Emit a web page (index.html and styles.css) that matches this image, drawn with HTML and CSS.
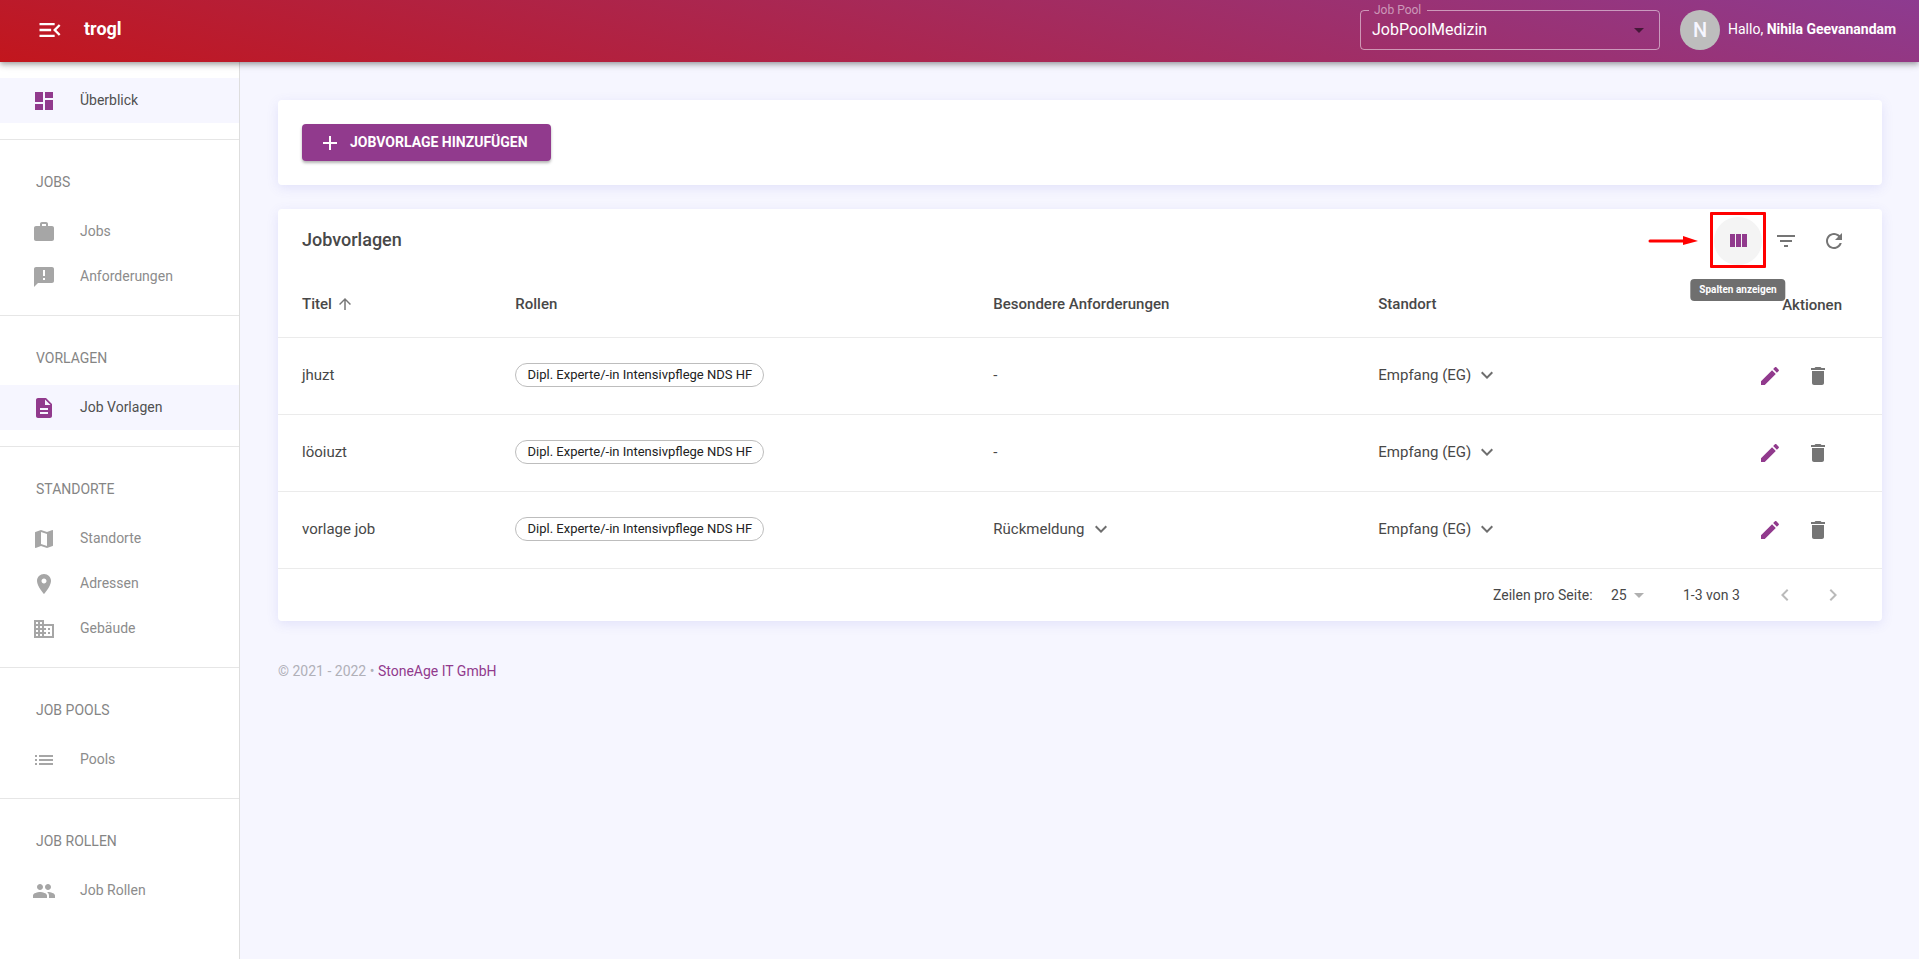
FILE: index.html
```html
<!DOCTYPE html>
<html lang="de">
<head>
<meta charset="utf-8">
<meta name="viewport" content="width=device-width, initial-scale=1">
<title>trogl – Job Vorlagen</title>
<link rel="stylesheet" href="styles.css">
</head>
<body>
<svg class="sprite" aria-hidden="true">
  <symbol id="menu-open" viewBox="0 0 24 24"><path d="M3 18h13v-2H3v2zM3 13h10v-2H3v2zm0-7v2h13V6H3zm18 9.59L17.42 12 21 8.41 19.59 7l-5 5 5 5L21 15.59z"/></symbol>
  <symbol id="dashboard" viewBox="0 0 24 24"><path d="M3 13h8V3H3v10zm0 8h8v-6H3v6zm10 0h8V11h-8v10zm0-18v6h8V3h-8z"/></symbol>
  <symbol id="work" viewBox="0 0 24 24"><path d="M20 6h-4V4c0-1.11-.89-2-2-2h-4c-1.11 0-2 .89-2 2v2H4c-1.11 0-1.99.89-1.99 2L2 19c0 1.11.89 2 2 2h16c1.11 0 2-.89 2-2V8c0-1.11-.89-2-2-2zm-6 0h-4V4h4v2z"/></symbol>
  <symbol id="feedback" viewBox="0 0 24 24"><path d="M20 2H4c-1.1 0-1.99.9-1.99 2L2 22l4-4h14c1.1 0 2-.9 2-2V4c0-1.1-.9-2-2-2zm-7 13h-2v-2h2v2zm0-4h-2V5h2v6z"/></symbol>
  <symbol id="description" viewBox="0 0 24 24"><path d="M14 2H6c-1.1 0-1.99.9-1.99 2L4 20c0 1.1.89 2 1.99 2H18c1.1 0 2-.9 2-2V8l-6-6zm2 16H8v-2h8v2zm0-4H8v-2h8v2zm-3-5V3.5L18.5 9H13z"/></symbol>
  <symbol id="map" viewBox="0 0 24 24"><path d="M20.5 3l-.16.03L15 5.1 9 3 3.36 4.9c-.21.07-.36.25-.36.48V20.5c0 .28.22.5.5.5l.16-.03L9 18.9l6 2.1 5.64-1.9c.21-.07.36-.25.36-.48V3.5c0-.28-.22-.5-.5-.5zM15 19l-6-2.11V5l6 2.11V19z"/></symbol>
  <symbol id="place" viewBox="0 0 24 24"><path d="M12 2C8.13 2 5 5.13 5 9c0 5.25 7 13 7 13s7-7.75 7-13c0-3.87-3.13-7-7-7zm0 9.5c-1.38 0-2.5-1.12-2.5-2.5s1.12-2.5 2.5-2.5 2.5 1.12 2.5 2.5-1.12 2.5-2.5 2.5z"/></symbol>
  <symbol id="business" viewBox="0 0 24 24"><path d="M12 7V3H2v18h20V7H12zM6 19H4v-2h2v2zm0-4H4v-2h2v2zm0-4H4V9h2v2zm0-4H4V5h2v2zm4 12H8v-2h2v2zm0-4H8v-2h2v2zm0-4H8V9h2v2zm0-4H8V5h2v2zm10 12h-8v-2h2v-2h-2v-2h2v-2h-2V9h8v10zm-2-8h-2v2h2v-2zm0 4h-2v2h2v-2z"/></symbol>
  <symbol id="list" viewBox="0 0 24 24"><path d="M3 13h2v-2H3v2zm0 4h2v-2H3v2zm0-8h2V7H3v2zm4 4h14v-2H7v2zm0 4h14v-2H7v2zM7 7v2h14V7H7z"/></symbol>
  <symbol id="people" viewBox="0 0 24 24"><path d="M16 11c1.66 0 2.99-1.34 2.99-3S17.66 5 16 5c-1.66 0-3 1.34-3 3s1.34 3 3 3zm-8 0c1.66 0 2.99-1.34 2.99-3S9.66 5 8 5C6.34 5 5 6.34 5 8s1.34 3 3 3zm0 2c-2.33 0-7 1.17-7 3.5V19h14v-2.5c0-2.33-4.67-3.5-7-3.5zm8 0c-.29 0-.62.02-.97.05 1.16.84 1.97 1.97 1.97 3.45V19h6v-2.5c0-2.33-4.67-3.5-7-3.5z"/></symbol>
  <symbol id="add" viewBox="0 0 24 24"><path d="M19 13h-6v6h-2v-6H5v-2h6V5h2v6h6v2z"/></symbol>
  <symbol id="columns" viewBox="0 0 24 24"><path d="M10 18h5V5h-5v13zm-6 0h5V5H4v13zM16 5v13h5V5h-5z"/></symbol>
  <symbol id="filter" viewBox="0 0 24 24"><path d="M10 18h4v-2h-4v2zM3 6v2h18V6H3zm3 7h12v-2H6v2z"/></symbol>
  <symbol id="refresh" viewBox="0 0 24 24"><path d="M17.65 6.35C16.2 4.9 14.21 4 12 4c-4.42 0-7.99 3.58-7.99 8s3.57 8 7.99 8c3.73 0 6.84-2.55 7.73-6h-2.08c-.82 2.33-3.04 4-5.65 4-3.31 0-6-2.69-6-6s2.69-6 6-6c1.66 0 3.14.69 4.22 1.78L13 11h7V4l-2.35 2.35z"/></symbol>
  <symbol id="arrow-up" viewBox="0 0 24 24"><path d="M4 12l1.41 1.41L11 7.83V20h2V7.83l5.58 5.59L20 12l-8-8-8 8z"/></symbol>
  <symbol id="expand" viewBox="0 0 24 24"><path d="M16.59 8.59L12 13.17 7.41 8.59 6 10l6 6 6-6z"/></symbol>
  <symbol id="drop" viewBox="0 0 24 24"><path d="M7 10l5 5 5-5z"/></symbol>
  <symbol id="edit" viewBox="0 0 24 24"><path d="M3 17.25V21h3.75L17.81 9.94l-3.75-3.75L3 17.25zM20.71 7.04c.39-.39.39-1.02 0-1.41l-2.34-2.34c-.39-.39-1.02-.39-1.41 0l-1.83 1.83 3.75 3.75 1.83-1.83z"/></symbol>
  <symbol id="delete" viewBox="0 0 24 24"><path d="M6 19c0 1.1.9 2 2 2h8c1.1 0 2-.9 2-2V7H6v12zM19 4h-3.5l-1-1h-5l-1 1H5v2h14V4z"/></symbol>
  <symbol id="left" viewBox="0 0 24 24"><path d="M15.41 7.41L14 6l-6 6 6 6 1.41-1.41L10.83 12z"/></symbol>
  <symbol id="right" viewBox="0 0 24 24"><path d="M10 6L8.59 7.41 13.17 12l-4.58 4.59L10 18l6-6z"/></symbol>
</svg>

<header class="topbar">
  <button class="menu-button" type="button" aria-label="Menü schließen"><svg class="icon-large"><use href="#menu-open"/></svg></button>
  <a class="brand" href="#">trogl</a>
  <fieldset class="pool">
    <legend><label for="pool">Job Pool</label></legend>
    <div class="pool-control">
      <select id="pool"><option>JobPoolMedizin</option></select>
      <svg class="icon pool-arrow"><use href="#drop"/></svg>
    </div>
  </fieldset>
  <div class="user">
    <span class="avatar">N</span>
    <span class="greeting">Hallo, <b>Nihila Geevanandam</b></span>
  </div>
</header>

<div class="layout">
  <nav class="sidebar">
    <section class="nav-group">
      <a class="nav-item active" href="#"><svg class="icon"><use href="#dashboard"/></svg><span>Überblick</span></a>
    </section>
    <section class="nav-group">
      <h2>JOBS</h2>
      <a class="nav-item" href="#"><svg class="icon"><use href="#work"/></svg><span>Jobs</span></a>
      <a class="nav-item" href="#"><svg class="icon"><use href="#feedback"/></svg><span>Anforderungen</span></a>
    </section>
    <section class="nav-group">
      <h2>VORLAGEN</h2>
      <a class="nav-item active" href="#"><svg class="icon"><use href="#description"/></svg><span>Job Vorlagen</span></a>
    </section>
    <section class="nav-group">
      <h2>STANDORTE</h2>
      <a class="nav-item" href="#"><svg class="icon"><use href="#map"/></svg><span>Standorte</span></a>
      <a class="nav-item" href="#"><svg class="icon"><use href="#place"/></svg><span>Adressen</span></a>
      <a class="nav-item" href="#"><svg class="icon"><use href="#business"/></svg><span>Gebäude</span></a>
    </section>
    <section class="nav-group">
      <h2>JOB POOLS</h2>
      <a class="nav-item" href="#"><svg class="icon"><use href="#list"/></svg><span>Pools</span></a>
    </section>
    <section class="nav-group">
      <h2>JOB ROLLEN</h2>
      <a class="nav-item" href="#"><svg class="icon"><use href="#people"/></svg><span>Job Rollen</span></a>
    </section>
  </nav>

  <main class="content">
    <section class="card actions-card">
      <button class="add-button" type="button"><svg class="icon"><use href="#add"/></svg><span>JOBVORLAGE HINZUFÜGEN</span></button>
    </section>

    <section class="card">
      <div class="toolbar">
        <h1>Jobvorlagen</h1>
        <div class="columns-tool">
          <svg class="pointer" viewBox="0 0 50 10"><path d="M2 5h34" stroke="#f00" stroke-width="3" stroke-linecap="round"/><path d="M35 0l15 5-15 4z" fill="#f00"/></svg>
          <button class="icon-button hovered" type="button" aria-describedby="columns-tip" aria-label="Spalten anzeigen"><svg class="icon"><use href="#columns"/></svg></button>
          <span class="highlight"></span>
          <span class="tooltip" id="columns-tip" role="tooltip">Spalten anzeigen</span>
        </div>
        <button class="icon-button" type="button" aria-label="Filter"><svg class="icon"><use href="#filter"/></svg></button>
        <button class="icon-button" type="button" aria-label="Aktualisieren"><svg class="icon"><use href="#refresh"/></svg></button>
      </div>

      <table>
        <colgroup><col class="col-title"><col class="col-roles"><col class="col-needs"><col class="col-place"><col class="col-actions"></colgroup>
        <thead>
          <tr>
            <th><span class="with-icon">Titel <svg class="icon-small"><use href="#arrow-up"/></svg></span></th>
            <th>Rollen</th>
            <th>Besondere Anforderungen</th>
            <th>Standort</th>
            <th class="right">Aktionen</th>
          </tr>
        </thead>
        <tbody>
          <tr>
            <td>jhuzt</td>
            <td><span class="chip">Dipl. Experte/-in Intensivpflege NDS HF</span></td>
            <td>-</td>
            <td><span class="with-icon">Empfang (EG) <svg class="icon"><use href="#expand"/></svg></span></td>
            <td><div class="row-actions"><button class="icon-button primary" type="button" aria-label="Bearbeiten"><svg class="icon"><use href="#edit"/></svg></button><button class="icon-button" type="button" aria-label="Löschen"><svg class="icon"><use href="#delete"/></svg></button></div></td>
          </tr>
          <tr>
            <td>löoiuzt</td>
            <td><span class="chip">Dipl. Experte/-in Intensivpflege NDS HF</span></td>
            <td>-</td>
            <td><span class="with-icon">Empfang (EG) <svg class="icon"><use href="#expand"/></svg></span></td>
            <td><div class="row-actions"><button class="icon-button primary" type="button" aria-label="Bearbeiten"><svg class="icon"><use href="#edit"/></svg></button><button class="icon-button" type="button" aria-label="Löschen"><svg class="icon"><use href="#delete"/></svg></button></div></td>
          </tr>
          <tr>
            <td>vorlage job</td>
            <td><span class="chip">Dipl. Experte/-in Intensivpflege NDS HF</span></td>
            <td><span class="with-icon">Rückmeldung <svg class="icon"><use href="#expand"/></svg></span></td>
            <td><span class="with-icon">Empfang (EG) <svg class="icon"><use href="#expand"/></svg></span></td>
            <td><div class="row-actions"><button class="icon-button primary" type="button" aria-label="Bearbeiten"><svg class="icon"><use href="#edit"/></svg></button><button class="icon-button" type="button" aria-label="Löschen"><svg class="icon"><use href="#delete"/></svg></button></div></td>
          </tr>
        </tbody>
      </table>

      <div class="pagination">
        <label for="page-size">Zeilen pro Seite:</label>
        <div class="page-size">
          <select id="page-size"><option>25</option></select>
          <svg class="icon page-arrow"><use href="#drop"/></svg>
        </div>
        <span class="range">1-3 von 3</span>
        <button class="icon-button" type="button" aria-label="Vorherige Seite" disabled><svg class="icon"><use href="#left"/></svg></button>
        <button class="icon-button" type="button" aria-label="Nächste Seite" disabled><svg class="icon"><use href="#right"/></svg></button>
      </div>
    </section>

    <footer>© 2021 - 2022 • <a href="#">StoneAge IT GmbH</a></footer>
  </main>
</div>
</body>
</html>
```
FILE: styles.css
```css
:root {
  --purple: #913a8d;
  --text: #484848;
  --muted: #8c8c8c;
  --line: #ebebeb;
  --page: #f6f6ff;
}

* { box-sizing: border-box; }

body {
  margin: 0;
  min-height: 100vh;
  display: flex;
  flex-direction: column;
  background: var(--page);
  color: var(--text);
  font: 14px/20px Roboto, "Liberation Sans", sans-serif;
}

a { text-decoration: none; color: inherit; }

button, select { font: inherit; color: inherit; }

button {
  border: 0;
  padding: 0;
  background: none;
  cursor: pointer;
}

select {
  appearance: none;
  border: 0;
  padding: 0;
  background: none;
  outline: 0;
}

svg { display: block; flex: none; fill: currentColor; }

.sprite { position: absolute; width: 0; height: 0; }
.icon { width: 24px; height: 24px; }
.icon-small { width: 18px; height: 18px; color: #777; }
.icon-large { width: 28px; height: 28px; }

/* Top bar */
.topbar {
  position: sticky;
  top: 0;
  z-index: 2;
  height: 62px;
  padding: 0 19px 2px 36px;
  display: flex;
  align-items: center;
  background: linear-gradient(15deg, #c2161d, #8d3b90);
  color: #fff;
  box-shadow: 0 2px 4px -1px rgba(0, 0, 0, .2), 0 4px 5px rgba(0, 0, 0, .14), 0 1px 10px rgba(0, 0, 0, .12);
}

.brand {
  margin-left: 20px;
  padding-bottom: 2px;
  font-size: 18px;
  font-weight: 700;
}

.pool {
  width: 300px;
  height: 46px;
  margin: 0 20px 10px auto;
  padding: 0;
  align-self: flex-end;
  border: 1px solid rgba(255, 255, 255, .5);
  border-radius: 4px;
}

.pool legend {
  margin-left: 8px;
  padding: 0 6px 0 5px;
  color: rgba(255, 255, 255, .5);
  font-size: 12px;
  line-height: 12px;
}

.pool-control, .page-size { display: grid; align-items: center; }
.pool-control > *, .page-size > * { grid-area: 1 / 1; }

.pool select {
  width: 100%;
  height: 28px;
  padding-left: 11px;
  font-size: 16px;
}

.pool-arrow, .page-arrow { justify-self: end; pointer-events: none; }
.pool-arrow { margin-right: 8px; color: rgba(0, 0, 0, .54); }

.user { display: flex; align-items: center; gap: 8px; }

.avatar {
  width: 40px;
  height: 40px;
  border-radius: 50%;
  display: grid;
  place-items: center;
  background: #bdbdbd;
  color: #f6f6ff;
  font-size: 20px;
  font-weight: 500;
}

.greeting { min-width: 172px; padding-bottom: 2px; }

/* Shell */
.layout { flex: 1; display: flex; }

.sidebar {
  width: 240px;
  flex: none;
  background: #fff;
  border-right: 1px solid #dedede;
}

.nav-group { padding: 16px 0; }
.nav-group + .nav-group { border-top: 1px solid #e6e6e6; }

.nav-group h2 {
  margin: 0;
  height: 53px;
  padding: 16px 36px;
  color: #858585;
  font-size: 14px;
  font-weight: 400;
}

.nav-item {
  height: 45px;
  padding: 0 32px;
  display: flex;
  align-items: center;
  gap: 24px;
  color: var(--muted);
}

.nav-item svg { color: #a6a6a6; }
.nav-item span { padding-bottom: 2px; }
.nav-item.active { background: var(--page); color: #505050; }
.nav-item.active svg { color: var(--purple); }

/* Content */
.content {
  flex: 1;
  min-width: 0;
  padding: 38px 37px 38px 38px;
  display: flex;
  flex-direction: column;
  gap: 24px;
}

.card {
  background: #fff;
  border-radius: 4px;
  box-shadow: 0 3px 12px rgba(90, 90, 220, .13);
}

.actions-card { padding: 24px; }

.add-button {
  min-width: 249px;
  height: 37px;
  padding: 0 16px;
  display: flex;
  align-items: center;
  gap: 8px;
  border-radius: 4px;
  background: var(--purple);
  color: #fff;
  font-weight: 700;
  box-shadow: 0 2px 3px rgba(0, 0, 0, .3);
}

.add-button span { padding-bottom: 2px; }

.toolbar {
  height: 64px;
  padding: 0 24px;
  display: flex;
  align-items: center;
}

.toolbar h1 {
  margin: 0 auto 0 0;
  padding-bottom: 2px;
  font-size: 18px;
  font-weight: 500;
}

.icon-button {
  width: 48px;
  height: 48px;
  display: grid;
  place-items: center;
  border-radius: 50%;
  color: #757575;
}

.icon-button:disabled { color: #bababa; }
.icon-button.primary { color: var(--purple); }
.icon-button.hovered { background: #f4f4f4; color: var(--purple); }

.columns-tool { position: relative; }

.highlight {
  position: absolute;
  inset: -5px -4px -3px;
  border: 3px solid #f00;
  border-radius: 1px;
  pointer-events: none;
}

.pointer {
  position: absolute;
  right: 64px;
  top: 19px;
  width: 50px;
  height: 10px;
}

.tooltip {
  position: absolute;
  top: 62px;
  left: 50%;
  transform: translateX(-50%);
  padding: 4px 9px;
  border-radius: 4px;
  background: #6f6f6f;
  color: #fff;
  font-size: 10px;
  font-weight: 700;
  line-height: 14px;
  white-space: nowrap;
}

/* Table */
table {
  width: 100%;
  table-layout: fixed;
  border-collapse: separate;
  border-spacing: 0;
}

.col-title { width: 13.8%; }
.col-roles { width: 29.8%; }
.col-needs { width: 24%; }
.col-place { width: 16.4%; }
.col-actions { width: 16%; }

th, td {
  padding: 0 16px 2px;
  border-bottom: 1px solid var(--line);
  text-align: left;
  font-size: 15px;
  font-weight: 400;
}

th { height: 65px; font-weight: 500; }
td { height: 77px; }

th:first-child, td:first-child { padding-left: 24px; }
th:last-child, td:last-child { padding-right: 40px; padding-bottom: 0; }
.right { text-align: right; }

.with-icon { display: flex; align-items: center; gap: 4px; }
.with-icon .icon { color: #6e6e6e; }

.chip {
  display: inline-block;
  min-width: 249px;
  padding: 0 8px;
  border: 1px solid #bdbdbd;
  border-radius: 12px;
  color: #222;
  font-size: 13px;
  line-height: 22px;
  text-align: center;
  vertical-align: middle;
}

.row-actions { display: flex; justify-content: flex-end; }

.pagination {
  height: 52px;
  padding-right: 25px;
  display: flex;
  align-items: center;
  justify-content: flex-end;
}

.pagination label { min-width: 102px; }
.page-size { width: 40px; margin-left: 16px; }
.page-size select { width: 100%; }
.page-arrow { color: #b0b0b0; }
.range { min-width: 58px; margin: 0 20px 0 32px; }

footer { padding-top: 16px; color: #b0b0b8; }
footer a { color: var(--purple); }
```
